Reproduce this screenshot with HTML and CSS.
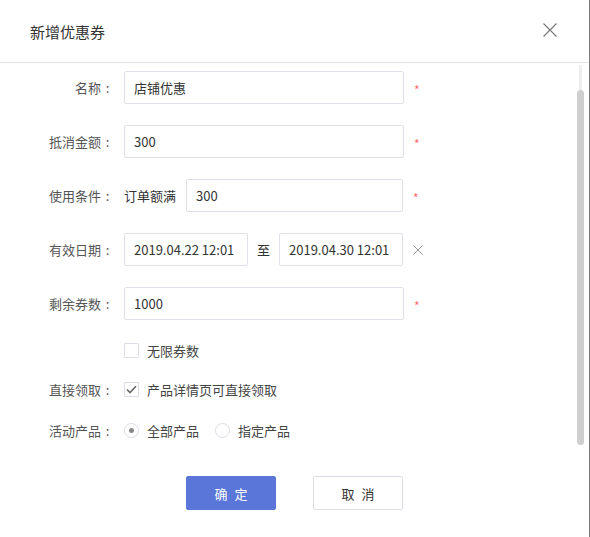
FILE: index.html
```html
<!DOCTYPE html>
<html lang="zh">
<head>
<meta charset="utf-8">
<title>新增优惠券</title>
<link rel="stylesheet" href="styles.css">
</head>
<body>
<div class="dialog">
  <div class="header">
    <span class="title">新增优惠券</span>
    <svg class="close" width="14" height="14" viewBox="0 0 14 14"><path d="M0.5 0.5L13.5 13.5M13.5 0.5L0.5 13.5" stroke="#777" stroke-width="1.1" fill="none"/></svg>
  </div>
  <div class="body">
    <div class="scroll-track"></div>
    <div class="scroll-thumb"></div>
    <form class="form">
      <div class="row">
        <label class="label">名称<span class="colon">:</span></label>
        <div class="input wide">店铺优惠</div>
        <span class="req">*</span>
      </div>
      <div class="row">
        <label class="label">抵消金额<span class="colon">:</span></label>
        <div class="input wide">300</div>
        <span class="req">*</span>
      </div>
      <div class="row">
        <label class="label">使用条件<span class="colon">:</span></label>
        <span class="prefix">订单额满</span>
        <div class="input cond">300</div>
        <span class="req">*</span>
      </div>
      <div class="row">
        <label class="label">有效日期<span class="colon">:</span></label>
        <div class="input date">2019.04.22 12:01</div>
        <span class="to">至</span>
        <div class="input date">2019.04.30 12:01</div>
        <svg class="clear" width="10" height="10" viewBox="0 0 10 10"><path d="M0.5 0.5L9.5 9.5M9.5 0.5L0.5 9.5" stroke="#999" stroke-width="1" fill="none"/></svg>
      </div>
      <div class="row">
        <label class="label">剩余券数<span class="colon">:</span></label>
        <div class="input wide">1000</div>
        <span class="req">*</span>
      </div>
      <div class="row small r-unlimited">
        <span class="label"></span>
        <span class="check"></span>
        <span class="opt">无限券数</span>
      </div>
      <div class="row small r-direct">
        <label class="label">直接领取<span class="colon">:</span></label>
        <span class="check">
          <svg width="11" height="9" viewBox="0 0 11 9"><path d="M1 4.5L4 7.5L10 1.2" stroke="#666" stroke-width="1.6" fill="none"/></svg>
        </span>
        <span class="opt">产品详情页可直接领取</span>
      </div>
      <div class="row small r-products">
        <label class="label">活动产品<span class="colon">:</span></label>
        <span class="radio on"></span>
        <span class="opt">全部产品</span>
        <span class="radio"></span>
        <span class="opt">指定产品</span>
      </div>
      <div class="actions">
        <button type="button" class="btn primary">确 定</button>
        <button type="button" class="btn">取 消</button>
      </div>
    </form>
  </div>
</div>
</body>
</html>
```
FILE: styles.css
```css
html, body {
  margin: 0;
  padding: 0;
  background: #fff;
}
body {
  font-family: "Noto Sans CJK SC", "Noto Sans", sans-serif;
  font-size: 13px;
  color: #333;
}
.dialog {
  width: 589px;
  height: 537px;
  border-right: 1px solid #7d7d7d;
  background: #fff;
  display: flex;
  flex-direction: column;
}
.header {
  height: 62px;
  border-bottom: 1px solid #e4e4ec;
  display: flex;
  align-items: center;
  justify-content: space-between;
  padding: 0 32px 0 30px;
  flex: none;
}
.title {
  font-size: 15px;
  color: #333;
  line-height: 20px;
  margin-top: 2px;
}
.close {
  display: block;
  margin-top: -2px;
}
.body {
  position: relative;
  flex: 1;
}
.scroll-track {
  position: absolute;
  left: 579px;
  top: 2px;
  width: 3px;
  height: 30px;
  background: #eee;
}
.scroll-thumb {
  position: absolute;
  left: 577px;
  top: 27px;
  width: 7px;
  height: 355px;
  background: #cfcfcf;
  border-radius: 4px;
}
.form {
  padding-top: 8px;
}
.row {
  display: flex;
  align-items: center;
  height: 33px;
  margin-bottom: 21px;
}
.row.small {
  height: 20px;
}
.r-unlimited { margin-top: -1px; margin-bottom: 19px; }
.r-direct { margin-bottom: 21px; }
.r-products { margin-bottom: 36px; }
.label {
  width: 114px;
  margin-right: 10px;
  text-align: right;
  color: #555;
  flex: none;
}
.colon {
  display: inline-block;
  width: 13px;
  text-align: center;
}
.input {
  box-sizing: border-box;
  height: 33px;
  border: 1px solid #dfe0e8;
  border-radius: 2px;
  padding: 0 9px;
  display: flex;
  align-items: center;
  color: #333;
}
.wide { width: 280px; }
.cond { width: 217px; }
.date { width: 124px; }
.prefix {
  width: 62px;
  color: #333;
}
.to {
  width: 31px;
  text-align: center;
}
.req {
  color: #f56c6c;
  font-size: 12px;
  margin-left: 10px;
  margin-top: 4px;
}
.clear {
  margin-left: 10px;
}
.check {
  box-sizing: border-box;
  width: 15px;
  height: 15px;
  border: 1px solid #dcdde6;
  border-radius: 1px;
  display: flex;
  align-items: center;
  justify-content: center;
  flex: none;
}
.radio {
  box-sizing: border-box;
  width: 15px;
  height: 15px;
  border: 1px solid #dcdde6;
  border-radius: 50%;
  display: flex;
  align-items: center;
  justify-content: center;
  flex: none;
}
.radio.on::after {
  content: "";
  width: 5px;
  height: 5px;
  border-radius: 50%;
  background: #888;
}
.opt {
  margin-left: 8px;
  margin-right: 16px;
  color: #444;
}
.actions {
  display: flex;
  gap: 37px;
  padding-left: 186px;
}
.btn {
  box-sizing: border-box;
  width: 90px;
  height: 34px;
  border: 1px solid #dcdde6;
  border-radius: 2px;
  background: #fff;
  font-family: inherit;
  font-size: 13px;
  color: #333;
  letter-spacing: 2px;
  padding: 0;
  padding-left: 2px;
}
.btn.primary {
  background: #5a76d8;
  border-color: #5a76d8;
  color: #fff;
}
```
